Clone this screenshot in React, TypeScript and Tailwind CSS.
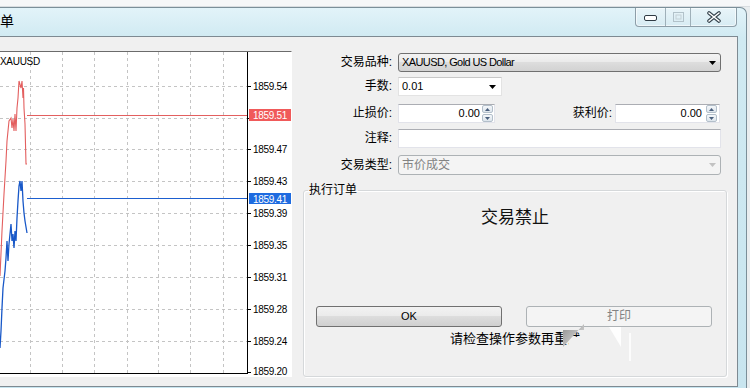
import React from 'react';

// price series, x in px from plot left, y in px from plot top
const RED: number[][] = [
  [0, 224], [2, 179], [4, 142], [6, 109], [7, 89], [9, 69], [11, 66], [12, 76], [13, 67], [14, 79],
  [15, 62], [16, 79], [17, 56], [18, 46], [19, 29], [21, 36], [22, 29], [23, 46], [23.5, 36],
  [24, 56], [25, 72], [26, 112], [27, 112],
];
const BLUE: number[][] = [
  [0, 296], [1, 279], [2, 256], [3, 236], [5, 219], [6, 206], [7, 189], [8, 209], [9, 192],
  [11, 172], [12, 189], [13, 182], [14, 196], [15, 179], [16, 189], [17, 166], [18, 149],
  [19, 134], [20, 129], [21, 139], [22, 129], [23, 149], [24, 161], [25, 169], [26, 175], [27, 181],
];
const H_GRID = [34, 66, 97, 129, 161, 193, 225, 257, 289];
const V_GRID = [-2, 30, 62, 94, 127, 158, 190, 223];
const AXIS = [
  { y: 34, v: '1859.54' },
  { y: 97, v: '1859.47' },
  { y: 129, v: '1859.43' },
  { y: 161, v: '1859.39' },
  { y: 193, v: '1859.35' },
  { y: 225, v: '1859.31' },
  { y: 257, v: '1859.28' },
  { y: 289, v: '1859.24' },
  { y: 319, v: '1859.20' },
];

const pts = (a: number[][]) => a.map((p) => p.join(',')).join(' ');

function Arrow({ color = '#000' }: { color?: string }) {
  return (
    <svg width="7" height="4" viewBox="0 0 7 4" className="block">
      <path d="M0 0H7L3.5 4Z" fill={color} />
    </svg>
  );
}

function Spinner() {
  return (
    <div className="flex flex-col w-[11px] h-[17px] gap-px">
      <div className="flex-1 flex items-center justify-center border border-[#b3bfca] rounded-[2px] bg-[linear-gradient(180deg,#f4f7fa,#dde5ec)]">
        <svg width="5" height="3" viewBox="0 0 5 3" className="block"><path d="M0 3H5L2.5 0Z" fill="#4a5f7d" /></svg>
      </div>
      <div className="flex-1 flex items-center justify-center border border-[#b3bfca] rounded-[2px] bg-[linear-gradient(180deg,#f4f7fa,#dde5ec)]">
        <svg width="5" height="3" viewBox="0 0 5 3" className="block"><path d="M0 0H5L2.5 3Z" fill="#4a5f7d" /></svg>
      </div>
    </div>
  );
}

function TitleBar() {
  return (
    <div className="h-[28px] flex items-start justify-between">
      <span className="ml-0 text-[14px] leading-[26px] text-black">单</span>
      <div className="flex h-[19px] mr-[9px] border border-t-0 border-[#8d9ea8] rounded-b-[4px] bg-[linear-gradient(180deg,#e9f5f9,#d7ecf3)] shadow-[inset_0_0_0_1px_rgba(255,255,255,0.6)]">
        <div className="w-[30px] flex items-center justify-center border-r border-[#9fb0b9]">
          <svg width="13" height="6" viewBox="0 0 13 6" className="block mt-[2px]">
            <rect x="0.5" y="0.5" width="12" height="5" rx="1.5" fill="#fff" stroke="#2f3b44" />
          </svg>
        </div>
        <div className="w-[25px] flex items-center justify-center border-r border-[#9fb0b9]">
          <svg width="11" height="10" viewBox="0 0 11 10" className="block">
            <rect x="0.5" y="0.5" width="10" height="9" fill="none" stroke="#b2c2ca" />
            <rect x="3" y="3" width="5" height="4" fill="none" stroke="#c3d0d6" />
          </svg>
        </div>
        <div className="w-[45px] flex items-center justify-center">
          <svg width="14" height="12" viewBox="0 0 14 12" className="block">
            <path d="M2 2L12 10M12 2L2 10" stroke="#34424c" strokeWidth="3.6" strokeLinecap="round" />
            <path d="M2 2L12 10M12 2L2 10" stroke="#fff" strokeWidth="1.6" strokeLinecap="round" />
          </svg>
        </div>
      </div>
    </div>
  );
}

function Chart() {
  return (
    <div className="mt-[14px] w-[292px] h-[326px] bg-white border-t border-t-[#6b6b6b] border-r border-r-white border-b border-b-white flex shrink-0">
      <div className="relative w-[248px] h-[322px] border-r border-b border-black">
        <svg width="247" height="321" className="block">
          {H_GRID.map((y) => (
            <line key={'h' + y} x1="0" x2="247" y1={y + 0.5} y2={y + 0.5} stroke="#c4c4c4" strokeDasharray="3 3" />
          ))}
          {V_GRID.map((x) => (
            <line key={'v' + x} x1={x + 0.5} x2={x + 0.5} y1="0" y2="321" stroke="#c4c4c4" strokeDasharray="3 3" />
          ))}
          <line x1="27" x2="247" y1="63.5" y2="63.5" stroke="#e35f5f" />
          <line x1="27" x2="247" y1="146.5" y2="146.5" stroke="#1d5fcf" />
          <polyline points={pts(RED)} fill="none" stroke="#e35f5f" strokeWidth="1.1" />
          <polyline points={pts(BLUE)} fill="none" stroke="#1858c8" strokeWidth="1.3" />
        </svg>
        <span className="absolute left-0 top-[4px] text-[10px] leading-[12px] tracking-[-0.3px] text-black">XAUUSD</span>
      </div>
      <div className="flex-1">
        <svg width="43" height="324" className="block font-['Liberation_Sans',sans-serif]">
          {[...H_GRID, 320].map((y) => (
            <line key={y} x1="0" x2="3" y1={y + 0.5} y2={y + 0.5} stroke="#000" />
          ))}
          {AXIS.map((a) => (
            <text key={a.v} x="5" y={a.y + 4} fontSize="10" letterSpacing="-0.3" fill="#000">{a.v}</text>
          ))}
          <rect x="1" y="57" width="42" height="12" fill="#f05a5a" />
          <text x="5" y="67" fontSize="10" letterSpacing="-0.3" fill="#fff">1859.51</text>
          <rect x="1" y="141" width="42" height="11" fill="#1e6be0" />
          <text x="5" y="150.5" fontSize="10" letterSpacing="-0.3" fill="#fff">1859.41</text>
        </svg>
      </div>
    </div>
  );
}

function Label({ children, w = 'w-[92px]' }: { children: React.ReactNode; w?: string }) {
  return <span className={`${w} text-right text-[12px] leading-[19px] text-black shrink-0`}>{children}</span>;
}

function OrderForm() {
  return (
    <div className="flex-1 flex flex-col pl-[8px]">
      <div className="mt-[16px] flex items-center gap-[6px] h-[19px]">
        <Label>交易品种:</Label>
        <div className="w-[323px] h-[19px] flex items-center justify-between pl-[3px] pr-[4px] border border-[#707070] rounded-[3px] bg-[linear-gradient(180deg,#f3f3f3,#ebebeb_45%,#dddddd_50%,#d2d2d2)]">
          <span className="text-[11px] tracking-[-0.6px]">XAUUSD, Gold US Dollar</span>
          <Arrow />
        </div>
      </div>
      <div className="mt-[5px] flex items-center gap-[6px] h-[19px]">
        <Label>手数:</Label>
        <div className="w-[104px] h-[19px] flex items-center justify-between pl-[3px] pr-[5px] bg-white border border-[#e3e3e3] border-t-[#c8c8c8]">
          <span className="text-[11px]">0.01</span>
          <Arrow />
        </div>
      </div>
      <div className="mt-[8px] flex items-center h-[19px]">
        <Label>止损价:</Label>
        <div className="ml-[6px] w-[97px] h-[19px] flex items-center justify-end gap-[2px] pr-px bg-white border border-[#e2e3ea] border-t-[#abadb3]">
          <span className="text-[11px]">0.00</span>
          <Spinner />
        </div>
        <Label w="w-[117px]">获利价:</Label>
        <div className="ml-[3px] w-[105px] h-[19px] flex items-center justify-end gap-[4px] pr-[2px] bg-white border border-[#e2e3ea] border-t-[#abadb3]">
          <span className="text-[11px]">0.00</span>
          <Spinner />
        </div>
      </div>
      <div className="mt-[6px] flex items-center gap-[6px] h-[19px]">
        <Label>注释:</Label>
        <div className="w-[323px] h-[19px] bg-white border border-[#e2e3ea] border-t-[#abadb3]" />
      </div>
      <div className="mt-[7px] flex items-center gap-[6px] h-[20px]">
        <Label>交易类型:</Label>
        <div className="w-[323px] h-[20px] flex items-center justify-between pl-[3px] pr-[4px] border border-[#adb2b5] rounded-[3px] bg-[#f4f4f4]">
          <span className="text-[12px] text-[#838383]">市价成交</span>
          <Arrow color="#c2c2c2" />
        </div>
      </div>
      <fieldset className="relative mt-[8px] ml-[3px] w-[424px] h-[194px] border border-[#d5d8da] rounded-[3px] px-[4px] shadow-[1px_1px_0_#fff,inset_1px_1px_0_#fff]">
        <legend className="px-px text-[12px] leading-[14px] text-black">执行订单</legend>
        <div className="mt-[11px] text-center text-[17px] leading-[20px] text-[#111]">交易禁止</div>
        <div className="mt-[78px] flex pl-[8px] gap-[24px]">
          <button type="button" className="w-[186px] h-[21px] border border-[#707070] rounded-[3px] bg-[linear-gradient(180deg,#f2f2f2,#ebebeb_45%,#dddddd_50%,#cfcfcf)] text-[11px] leading-[19px] text-black">
            OK
          </button>
          <button type="button" className="w-[186px] h-[21px] border border-[#adb2b5] rounded-[3px] bg-[#f4f4f4] text-[12px] leading-[19px] text-[#838383]">
            打印
          </button>
        </div>
        <div className="mt-[4px] text-center text-[13px] leading-[16px] text-black">请检查操作参数再重试</div>
        <svg width="70" height="40" viewBox="0 0 70 40" className="absolute left-[259px] top-[126px]">
          <defs>
            <linearGradient id="cur" x1="0" y1="0" x2="1" y2="1">
              <stop offset="0" stopColor="#8f8f8f" />
              <stop offset="1" stopColor="#e6e6e6" />
            </linearGradient>
          </defs>
          <rect x="6" y="14" width="14" height="16" fill="#f0f0f0" />
          <path d="M0 7H21V1L0 24Z" fill="url(#cur)" />
          <path d="M46 4H58V24Z" fill="#ffffff" opacity="0.9" />
          <rect x="66" y="10" width="2" height="28" fill="#ffffff" opacity="0.8" />
        </svg>
      </fieldset>
    </div>
  );
}

export default function App() {
  return (
    <div className="w-[750px] h-[388px] overflow-hidden bg-[#e9edef] font-['Liberation_Sans','Noto_Sans_CJK_SC',sans-serif] text-black select-none">
      <div className="h-[7px] bg-[#f6f7f8] border-b border-[#d9dde0]" />
      <div className="flex">
        <div className="w-[747px] h-[381px] flex flex-col rounded-tr-[7px] border-r border-t border-[#7b8f99] bg-[linear-gradient(180deg,#e2f3f9,#d0eaf2_30px,#c8e5ef)]">
          <TitleBar />
          <div className="flex">
            <div className="w-[738px] h-[351px] bg-[#f0f0f0] border-t border-r border-b border-[#7e8a92] flex overflow-hidden">
              <Chart />
              <OrderForm />
            </div>
          </div>
        </div>
      </div>
    </div>
  );
}
